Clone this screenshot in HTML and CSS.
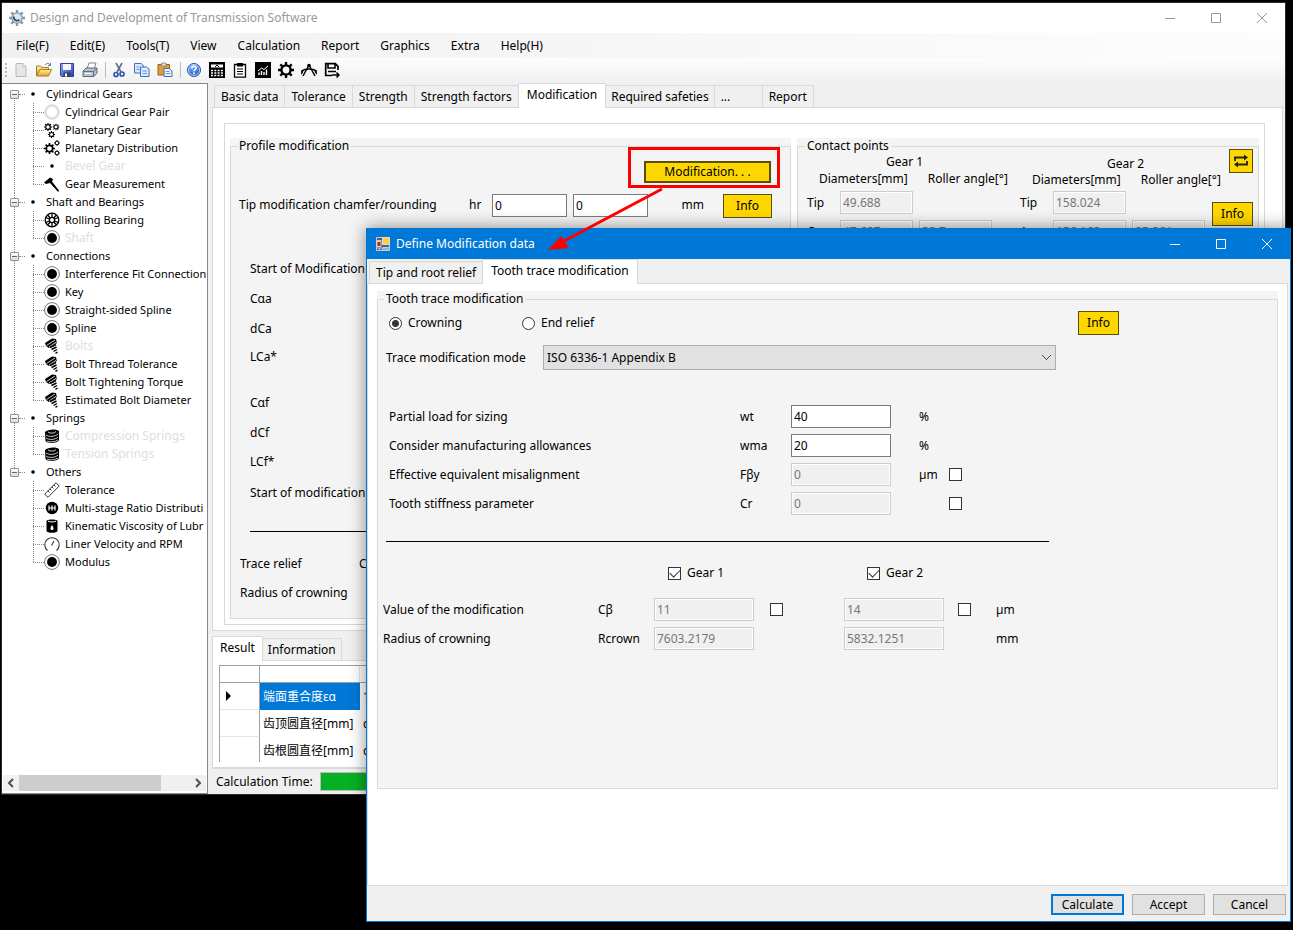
FILE: index.html
```
<!DOCTYPE html>
<html lang="en">
<head>
<meta charset="utf-8">
<title>Design and Development of Transmission Software</title>
<link rel="stylesheet" href="styles.css">
</head>
<body>
<svg class="sprite" aria-hidden="true">
  <defs>
    <linearGradient id="gold" x1="0" y1="0" x2="0" y2="1"><stop offset="0" stop-color="#fff0a0"/><stop offset="1" stop-color="#e8a317"/></linearGradient>
    <linearGradient id="blue" x1="0" y1="0" x2="1" y2="1"><stop offset="0" stop-color="#8fa8f5"/><stop offset="1" stop-color="#2a3fae"/></linearGradient>
    <radialGradient id="orb" cx=".4" cy=".3" r=".8"><stop offset="0" stop-color="#7fb2ff"/><stop offset="1" stop-color="#0b45b8"/></radialGradient>
    <symbol id="dot" viewBox="0 0 16 16"><circle cx="8" cy="8" r="1.8"/></symbol>
    <symbol id="ring" viewBox="0 0 16 16"><circle cx="8" cy="8" r="6.6" fill="none" stroke="#dcdcdc" stroke-width="2.4"/></symbol>
    <symbol id="disc" viewBox="0 0 16 16"><circle cx="8" cy="8" r="7.4" fill="#fff" stroke="#777" stroke-width="1"/><circle cx="8" cy="8" r="4.9"/></symbol>
    <symbol id="cog" viewBox="0 0 16 16"><circle cx="8" cy="8" r="4.6" fill="none" stroke="currentColor" stroke-width="2.4"/><path d="M8 0v3M8 13v3M0 8h3M13 8h3M2.3 2.3l2.2 2.2M11.5 11.5l2.2 2.2M13.7 2.3l-2.2 2.2M4.5 11.5l-2.2 2.2" stroke="currentColor" stroke-width="2.4"/></symbol>
    <symbol id="cogs3" viewBox="0 0 16 16"><use href="#cog" x="0" y="1" width="8" height="8"/><use href="#cog" x="8.500" y="1.500" width="7" height="7"/><use href="#cog" x="4" y="9" width="7" height="7"/></symbol>
    <symbol id="cogs2" viewBox="0 0 16 16"><use href="#cog" x="0" y="3" width="11" height="11"/><use href="#cog" x="10" y="0" width="6" height="6"/><use href="#cog" x="10" y="10" width="6" height="6"/></symbol>
    <symbol id="caliper" viewBox="0 0 16 16"><path d="M0 6.500l6-5 3 1.500-1 2.500 7 9-.8 1.500L6 7 2 8z"/></symbol>
    <symbol id="bearing" viewBox="0 0 16 16"><g fill="none" stroke="#000" stroke-width="1.300"><circle cx="8" cy="8" r="6.800"/><circle cx="8" cy="8" r="2.600"/><path d="M8 1v4.500M8 10.500V15M1.500 5.500l4 1.500M10.500 9l4 1.500M14.500 5.500l-4 1.500M5.500 9l-4 1.500M3.500 3l2.800 3M9.800 10l2.800 3M12.500 3L9.700 6M6.300 10L3.500 13"/></g></symbol>
    <symbol id="bolt" viewBox="0 0 16 16"><path d="M1 5l7-4.500 4 .5 1 4-8 5-3-2z"/><path d="M2.500 7.500L11 2M5 9l7.500-5" stroke="#fff" stroke-width=".8"/><path d="M6 9.500l6-3M7.500 11.500l5-2.500M9.500 13.500l3.500-2M11.500 15.300l2-1.300" stroke="#000" stroke-width="1.400"/></symbol>
    <symbol id="spring" viewBox="0 0 16 16"><path d="M1 4c2-3 12-3.500 14-1v9c-1 3.500-12 4-13.500 1z"/><path d="M4 4c2 1.800 7 1.300 8-.5M2 7c3 2 9 2 12-1M2 10c3 2 9 2 12-1M3 13c3 1.500 8 1 11-1" fill="none" stroke="#fff" stroke-width=".8"/></symbol>
    <symbol id="ruler" viewBox="0 0 16 16"><path d="M.7 12L12 .8l3.200 3.200L4 15.300zM4 9l1.500 1.500M6 7l1.500 1.500M8 5l1.500 1.500M10 3l1.500 1.500" fill="#fff" stroke="#333" stroke-width="1"/></symbol>
    <symbol id="ratio" viewBox="0 0 16 16"><circle cx="8" cy="8" r="6.200"/><path d="M5 5.500v5M8 5.500v5M11 5.500v5M5 8h6" stroke="#fff" stroke-width="1.200" fill="none"/></symbol>
    <symbol id="drum" viewBox="0 0 16 16"><path d="M2.500 3c0-2 11-2 11 0v10c0 2.400-11 2.400-11 0z"/><path d="M4 3.200c1.500 1 6.500 1 8 0" stroke="#fff" fill="none"/><path d="M8 7c2 2.500 2 5 0 5s-2-2.500 0-5z" fill="#fff"/></symbol>
    <symbol id="gauge" viewBox="0 0 16 16"><path d="M3.500 14.500A7.200 7.200 0 1 1 12.500 14.500M7.500 9.500L10 5" fill="none" stroke="#333" stroke-width="1.100"/></symbol>
    <symbol id="new" viewBox="0 0 16 16"><path d="M3 1.500h7l3 3v10H3z" fill="#e6e6e6" stroke="#b9b9b9"/><path d="M10 1.500v3h3" fill="#fff" stroke="#b9b9b9"/></symbol>
    <symbol id="open" viewBox="0 0 16 16"><path d="M.5 13.500v-9.500h4l1 1.500h7v3" fill="url(#gold)" stroke="#a87c22"/><path d="M.5 14L4 7.500h11.500l-3 6.500z" fill="url(#gold)" stroke="#a87c22"/><path d="M9 3c2-2.500 4-2 5 0m.5-2v2.500H12" fill="none" stroke="#5673a0"/></symbol>
    <symbol id="save" viewBox="0 0 16 16"><path d="M1.500 1.500h13v13h-12l-1-1z" fill="url(#blue)" stroke="#3241a0"/><path d="M4 2h8v6H4z" fill="#f4f6ff"/><path d="M4.500 10.500h7v4h-7z" fill="#333b66"/><path d="M6 11.500h2v3H6z" fill="#fff"/></symbol>
    <symbol id="print" viewBox="0 0 16 16"><path d="M5 7l2-6h7l-2 6z" fill="#fff" stroke="#7d8696"/><path d="M1 9l3-3h11v5l-3 3.500H1z" fill="#b9c2d0" stroke="#606b7c"/><path d="M1 9.500h10.500L15 6.500M11.500 9.500V14" fill="none" stroke="#606b7c"/><path d="M3 11.500h6" stroke="#fff"/></symbol>
    <symbol id="cut" viewBox="0 0 16 16"><path d="M5 1l5 9M11 1L6 10" stroke="#5f7185" stroke-width="1.600"/><g fill="none" stroke="#2b57b8" stroke-width="1.700"><circle cx="5" cy="12.500" r="2"/><circle cx="11" cy="12" r="2"/></g></symbol>
    <symbol id="copy" viewBox="0 0 16 16"><g fill="#dbe8ff" stroke="#3f6fc0"><path d="M.5 1.500h6.500l2.500 2V11h-9z"/><path d="M6.500 5h6l2.500 2v7.500H6.500z"/><path d="M2.500 5h3M2.500 7.500h3M8.500 9h4.500M8.500 11.500h4.500" stroke="#6c96dc"/></g></symbol>
    <symbol id="paste" viewBox="0 0 16 16"><path d="M1 2.500h11.500V13H1z" fill="#dc9d3c" stroke="#94631b"/><path d="M4.500 1h4.500v3H4.500z" fill="#dcdcdc" stroke="#777" stroke-width=".7"/><path d="M7 6.500h5.500L15 9v5.500H7z" fill="#eef4ff" stroke="#4a6cae"/><path d="M8.500 9.500h4M8.500 11.500h5" stroke="#6c96dc"/></symbol>
    <symbol id="help" viewBox="0 0 16 16"><circle cx="8" cy="8" r="6.500" fill="url(#orb)" stroke="#2356b5"/><circle cx="8" cy="8" r="5.500" fill="none" stroke="#dfeaff" stroke-width=".8"/><path d="M5.800 6.400c0-3 4.600-2.800 4.400-.3-.1 1.500-2.200 1.500-2.200 3.200M8 10.600v1.700" fill="none" stroke="#fff" stroke-width="1.600"/></symbol>
    <symbol id="calc" viewBox="0 0 16 16"><path d="M0 0h16v16H0z"/><path d="M2 2.500h12v3H2z" fill="#fff"/><path d="M6 5l2-2 2 2" stroke="#000" fill="none"/><path d="M2 8.500h12M2 11h12M2 13.500h12" stroke="#fff" stroke-width="1.400" stroke-dasharray="2 1.300"/></symbol>
    <symbol id="clip" viewBox="0 0 16 16"><path d="M2.500 2.500h11v12.700h-11z" fill="#fff" stroke="#000" stroke-width="1.300"/><path d="M5 1h6v3.500H5z"/><path d="M5 7h6M5 9.500h6M5 12h6" stroke="#000"/></symbol>
    <symbol id="chart" viewBox="0 0 16 16"><path d="M0 0h16v16H0z"/><path d="M4 13v-2.500M6.500 13V9M9 13v-3M11.500 13V7.500" stroke="#fff" stroke-width="1.400"/><path d="M3 9l3.500-3 2.500 1.500L13 4" fill="none" stroke="#fff"/></symbol>
    <symbol id="compass" viewBox="0 0 16 16"><path d="M8 3L2 14M8 3l6 11M0 9.500c4-3.500 12-3.500 16 0M0 12l2-3M16 12l-2-3" stroke="#000" stroke-width="1.500" fill="none"/><circle cx="8" cy="3.500" r="1.800"/></symbol>
    <symbol id="export" viewBox="0 0 16 16"><path d="M8 13.500H1.700V1.700h9.600L14 4.300V8" fill="none" stroke="#000" stroke-width="1.700"/><path d="M4 2v4h7V2M4 9.500h8" fill="none" stroke="#000" stroke-width="1.600"/><path d="M8 13h7M12.500 10.500L15 13l-2.500 2.500" fill="none" stroke="#000" stroke-width="1.500"/></symbol>
    <symbol id="min" viewBox="0 0 12 12"><path d="M1 6.500h10" stroke="currentColor"/></symbol>
    <symbol id="max" viewBox="0 0 12 12"><path d="M1.500 1.500h9v9h-9z" stroke="currentColor" fill="none"/></symbol>
    <symbol id="close" viewBox="0 0 12 12"><path d="M1 1l10 10M11 1L1 11" stroke="currentColor"/></symbol>
  </defs>
</svg>

<div class="desktop">
  <main class="window main-window">
    <header class="titlebar">
      <svg class="app-icon" viewBox="0 0 16 16"><use href="#cog" color="#8499ab"/><circle cx="8" cy="8" r="4.500" fill="#dbe8f0"/><path d="M5 6.500a3.200 3.200 0 0 0 5.500 3" fill="none" stroke="#2f4b66" stroke-width="1.700"/></svg>
      <h1>Design and Development of Transmission Software</h1>
      <div class="caption-buttons">
        <button aria-label="Minimize"><svg><use href="#min"/></svg></button>
        <button aria-label="Maximize"><svg><use href="#max"/></svg></button>
        <button aria-label="Close"><svg><use href="#close"/></svg></button>
      </div>
    </header>
    <nav class="menubar">
      <button>File(F)</button><button>Edit(E)</button><button>Tools(T)</button><button>View</button><button>Calculation</button><button>Report</button><button>Graphics</button><button>Extra</button><button>Help(H)</button>
    </nav>
    <div class="toolbar">
      <span class="grip"></span>
      <button aria-label="New"><svg><use href="#new"/></svg></button>
      <button aria-label="Open"><svg><use href="#open"/></svg></button>
      <button aria-label="Save"><svg><use href="#save"/></svg></button>
      <button aria-label="Print"><svg><use href="#print"/></svg></button>
      <span class="sep"></span>
      <button aria-label="Cut"><svg><use href="#cut"/></svg></button>
      <button aria-label="Copy"><svg><use href="#copy"/></svg></button>
      <button aria-label="Paste"><svg><use href="#paste"/></svg></button>
      <span class="sep"></span>
      <button aria-label="Help"><svg><use href="#help"/></svg></button>
      <button aria-label="Calculate"><svg><use href="#calc"/></svg></button>
      <button aria-label="Report"><svg><use href="#clip"/></svg></button>
      <button aria-label="Chart"><svg><use href="#chart"/></svg></button>
      <button aria-label="Settings"><svg><use href="#cog"/></svg></button>
      <button aria-label="Drawing"><svg><use href="#compass"/></svg></button>
      <button aria-label="Export"><svg><use href="#export"/></svg></button>
    </div>

    <div class="workspace">
      <aside class="tree-pane">
        <ul class="tree">
          <li><div class="node"><i class="expander"></i><i class="stub"></i><svg><use href="#dot"/></svg>Cylindrical Gears</div>
            <ul>
              <li><svg><use href="#ring"/></svg>Cylindrical Gear Pair</li>
              <li><svg><use href="#cogs3"/></svg>Planetary Gear</li>
              <li><svg><use href="#cogs2"/></svg>Planetary Distribution</li>
              <li class="off"><svg><use href="#dot"/></svg>Bevel Gear</li>
              <li><svg><use href="#caliper"/></svg>Gear Measurement</li>
            </ul></li>
          <li><div class="node"><i class="expander"></i><i class="stub"></i><svg><use href="#dot"/></svg>Shaft and Bearings</div>
            <ul>
              <li><svg><use href="#bearing"/></svg>Rolling Bearing</li>
              <li class="off"><svg><use href="#disc"/></svg>Shaft</li>
            </ul></li>
          <li><div class="node"><i class="expander"></i><i class="stub"></i><svg><use href="#dot"/></svg>Connections</div>
            <ul>
              <li><svg><use href="#disc"/></svg>Interference Fit Connection</li>
              <li><svg><use href="#disc"/></svg>Key</li>
              <li><svg><use href="#disc"/></svg>Straight-sided Spline</li>
              <li><svg><use href="#disc"/></svg>Spline</li>
              <li class="off"><svg><use href="#bolt"/></svg>Bolts</li>
              <li><svg><use href="#bolt"/></svg>Bolt Thread Tolerance</li>
              <li><svg><use href="#bolt"/></svg>Bolt Tightening Torque</li>
              <li><svg><use href="#bolt"/></svg>Estimated Bolt Diameter</li>
            </ul></li>
          <li><div class="node"><i class="expander"></i><i class="stub"></i><svg><use href="#dot"/></svg>Springs</div>
            <ul>
              <li class="off"><svg><use href="#spring"/></svg>Compression Springs</li>
              <li class="off"><svg><use href="#spring"/></svg>Tension Springs</li>
            </ul></li>
          <li><div class="node"><i class="expander"></i><i class="stub"></i><svg><use href="#dot"/></svg>Others</div>
            <ul>
              <li><svg><use href="#ruler"/></svg>Tolerance</li>
              <li><svg><use href="#ratio"/></svg>Multi-stage Ratio Distributi</li>
              <li><svg><use href="#drum"/></svg>Kinematic Viscosity of Lubr</li>
              <li><svg><use href="#gauge"/></svg>Liner Velocity and RPM</li>
              <li><svg><use href="#disc"/></svg>Modulus</li>
            </ul></li>
        </ul>
        <div class="scrollbar">
          <svg viewBox="0 0 16 16"><path d="M10 4L6 8l4 4" /></svg>
          <span class="track"><span class="thumb"></span></span>
          <svg viewBox="0 0 16 16"><path d="M6 4l4 4-4 4" /></svg>
        </div>
      </aside>

      <div class="content">
        <div class="tabs">
          <button>Basic data</button><button>Tolerance</button><button>Strength</button><button>Strength factors</button><button class="active">Modification</button><button>Required safeties</button><button class="more">...</button><button>Report</button>
        </div>
        <section class="page main-page">
          <div class="page-inner">
            <div class="group profile">
              <fieldset>
                <legend>Profile modification</legend>
                <div class="launch"><button class="gold focus">Modification. . .</button></div>
                <div class="tip-row">
                  <label for="tip">Tip modification chamfer/rounding</label><span>hr</span>
                  <input id="tip" value="0"><input aria-label="Tip, gear 2" value="0">
                  <span class="unit">mm</span><button class="gold info wide">Info</button>
                </div>
                <div class="factors">
                  <span>Start of Modification</span><span>Cαa</span><span>dCa</span><span>LCa*</span>
                  <span></span><span>Cαf</span><span>dCf</span><span>LCf*</span><span>Start of modification</span>
                </div>
                <hr>
                <div class="relief"><span>Trace relief</span><span>Crowning</span><span>Radius of crowning</span></div>
              </fieldset>
            </div>
            <div class="group contact">
              <fieldset>
                <legend>Contact points</legend>
                <div class="gear">
                  <div class="gear-name">Gear 1</div>
                  <div class="gear-head"><span>Diameters[mm]</span><span>Roller angle[°]</span></div>
                  <div class="gear-row"><label for="t1">Tip</label><input id="t1" value="49.688" disabled></div>
                  <div class="gear-row"><label for="c1">C</label><input id="c1" value="47.687" disabled><input aria-label="Angle 1" value="28.7" disabled></div>
                </div>
                <div class="gear second">
                  <div class="gear-name">Gear 2</div>
                  <div class="gear-head"><span>Diameters[mm]</span><span>Roller angle[°]</span></div>
                  <div class="gear-row"><label for="t2">Tip</label><input id="t2" value="158.024" disabled></div>
                  <div class="gear-row"><label for="c2">A</label><input id="c2" value="156.162" disabled><input aria-label="Angle 2" value="25.261" disabled></div>
                </div>
                <div class="side">
                  <button class="gold swap" aria-label="Swap"><svg viewBox="0 0 16 16"><path d="M2 8V4.500h10M14 8v3.500H4" fill="none" stroke="#222" stroke-width="1.800"/><path d="M11 1.500L15 4.500l-4 3zM5 8.500l-4 3 4 3z" fill="#222"/></svg></button>
                  <button class="gold info">Info</button>
                </div>
              </fieldset>
            </div>
          </div>
        </section>

        <div class="tabs result-tabs"><button class="active">Result</button><button>Information</button></div>
        <section class="page result-page">
          <table>
            <thead><tr><th></th><th></th><th></th></tr></thead>
            <tbody>
              <tr><th><svg class="marker" viewBox="0 0 6 10"><path d="M0 0l5 5-5 5z"/></svg></th><td class="selected">端面重合度εα</td><td>1.6</td></tr>
              <tr><th></th><td>齿顶圆直径[mm]</td><td>da</td></tr>
              <tr><th></th><td>齿根圆直径[mm]</td><td>df</td></tr>
            </tbody>
          </table>
        </section>
        <footer class="status"><span>Calculation Time:</span><span class="progress"></span></footer>
      </div>
    </div>
  </main>

  <section class="window dialog" role="dialog" aria-label="Define Modification data">
    <header class="titlebar">
      <svg class="app-icon" viewBox="0 0 16 16"><path d="M1.500 1.500h13v13h-13z" fill="#2f62bd" stroke="#d4c9b4"/><path d="M1.500 4.500h5M4.500 12v3M7.500 12v3M1.500 12h6M7.500 11.500h7" stroke="#d4c9b4"/><path d="M7.500 1.500h7v7h-7z" fill="#ffd23c" stroke="#e8dcc0"/><path d="M2 5.500h4v5H2z" fill="#b32222" stroke="#f0d0c0"/><path d="M8 12h6v2H8z" fill="#8db2f0"/></svg>
      <h2>Define Modification data</h2>
      <div class="caption-buttons">
        <button aria-label="Minimize"><svg><use href="#min"/></svg></button>
        <button aria-label="Maximize"><svg><use href="#max"/></svg></button>
        <button aria-label="Close"><svg><use href="#close"/></svg></button>
      </div>
    </header>
    <div class="tabs"><button>Tip and root relief</button><button class="active">Tooth trace modification</button></div>
    <div class="page dialog-page">
      <div class="group trace">
        <fieldset>
          <legend>Tooth trace modification</legend>
          <div class="kind">
            <label><input type="radio" name="kind" checked>Crowning</label>
            <label><input type="radio" name="kind">End relief</label>
            <button class="gold info">Info</button>
          </div>
          <div class="mode">
            <label for="mode">Trace modification mode</label>
            <select id="mode"><option>ISO 6336-1 Appendix B</option></select>
          </div>
          <div class="params">
            <label for="wt">Partial load for sizing</label><span>wt</span><input id="wt" value="40"><span class="unit">%</span><i></i>
            <label for="wma">Consider manufacturing allowances</label><span>wma</span><input id="wma" value="20"><span class="unit">%</span><i></i>
            <label for="fby">Effective equivalent misalignment</label><span>Fβy</span><input id="fby" value="0" disabled><span class="unit">µm</span><input type="checkbox" aria-label="Own Fβy">
            <label for="cr">Tooth stiffness parameter</label><span>Cr</span><input id="cr" value="0" disabled><span class="unit"></span><input type="checkbox" aria-label="Own Cr">
          </div>
          <hr>
          <div class="gear-checks">
            <label><input type="checkbox" checked>Gear 1</label>
            <label><input type="checkbox" checked>Gear 2</label>
          </div>
          <div class="values">
            <label for="cb">Value of the modification</label><span>Cβ</span><input id="cb" value="11" disabled><input type="checkbox" aria-label="Own Cβ, gear 1"><input aria-label="Cβ, gear 2" value="14" disabled><input type="checkbox" aria-label="Own Cβ, gear 2"><span>µm</span>
            <label for="rc">Radius of crowning</label><span>Rcrown</span><input id="rc" value="7603.2179" disabled><i></i><input aria-label="Rcrown, gear 2" value="5832.1251" disabled><i></i><span>mm</span>
          </div>
        </fieldset>
      </div>
    </div>
    <footer class="actions"><button class="default">Calculate</button><button>Accept</button><button>Cancel</button></footer>
  </section>

  <div class="callout-box"></div>
  <svg class="callout-arrow" viewBox="0 0 120 66"><path d="M116 2L18 54" stroke="#f00" stroke-width="3"/><path d="M2 63L15 49l8 12z" fill="#f00"/></svg>
</div>
</body>
</html>
```

FILE: styles.css
```
* { box-sizing: border-box; }

body {
  margin: 0;
  background: #000;
  color: #000;
  font: 12px/16px "Noto Sans", "Noto Sans CJK SC", sans-serif;
}

button, input, select { font: inherit; color: inherit; margin: 0; }
h1, h2 { margin: 0; font-size: 12px; font-weight: normal; }
ul { list-style: none; margin: 0; padding: 0; }
svg { display: block; width: 16px; height: 16px; flex: none; }
.sprite { position: absolute; width: 0; height: 0; }

.desktop { position: relative; height: 100vh; min-height: 930px; overflow: hidden; }

/* Windows */
.window { position: absolute; display: flex; flex-direction: column; background: #f0f0f0; }
.main-window { inset: 2px 7px 135px 1px; border: 1px solid #2b2b2b; }
.dialog { inset: 228px 2px 8px 366px; border: 1px solid #0078d7; box-shadow: 0 0 16px rgba(0, 0, 0, .45); }

.titlebar { display: flex; align-items: center; gap: 5px; height: 30px; flex: none; padding-left: 7px; background: #fff; color: #999; }
.titlebar h1, .titlebar h2 { flex: 1; }
.dialog .titlebar { background: #0078d7; color: #fff; padding-left: 8px; }
.caption-buttons { display: flex; }
.caption-buttons button { width: 46px; height: 28px; padding: 0 17px; border: 0; background: none; }
.caption-buttons svg { width: 12px; height: 12px; }

.menubar { display: flex; gap: 1px; height: 25px; flex: none; padding-left: 4px; background: linear-gradient(90deg, #f0f0f0, #fdfdfd); }
.menubar button { border: 0; background: none; padding: 0 10px; }

.toolbar { display: flex; align-items: center; height: 25px; flex: none; padding: 0 0 2px 3px; background: linear-gradient(#fdfdfd, #f0f0f0); }
.toolbar button { width: 23px; height: 22px; padding: 0 3px; border: 0; background: none; }
.grip { width: 2px; height: 14px; margin-right: 3px; background: repeating-linear-gradient(#b5b5b5 0 2px, transparent 2px 4px); }
.sep { width: 1px; height: 16px; margin: 0 2px 0 3px; background: #bdbdbd; }

.workspace { display: flex; flex: 1; min-height: 0; }

/* Navigation tree */
.tree-pane { display: flex; flex-direction: column; justify-content: space-between; width: 206px; flex: none; padding: 1px 1px 2px; background: #fff; border: 1px solid #828790; border-left: 0; }
.tree { overflow: hidden; white-space: nowrap; font-size: 11px; }
.tree > li { background: repeating-linear-gradient(#888 0 1px, transparent 1px 2px) 11px 0 / 1px 100% no-repeat; }
.tree > li:first-child { background-position: 11px 9px; }
.tree > li:last-child { background-size: 1px 9px; }
.node { display: flex; align-items: center; height: 18px; padding-left: 7px; }
.node svg { margin-right: 5px; }
.expander { width: 9px; height: 9px; flex: none; border: 1px solid #919191; border-radius: 1px; background: linear-gradient(#4b63a7, #4b63a7) center / 5px 1px no-repeat, linear-gradient(#fff, #ddd); }
.stub { width: 6px; flex: none; border-top: 1px dotted #888; }
.tree ul { margin-left: 30px; background: repeating-linear-gradient(#888 0 1px, transparent 1px 2px) 0 0 / 1px calc(100% - 9px) no-repeat; }
.tree ul li { display: flex; align-items: center; height: 18px; }
.tree ul li::before { content: ""; width: 11px; flex: none; border-top: 1px dotted #888; }
.tree ul svg { margin-right: 5px; }
.off { color: #dedede; font-size: 12px; }

.scrollbar { display: flex; height: 16px; background: #f0f0f0; }
.scrollbar path { fill: none; stroke: #505050; stroke-width: 2; }
.track { flex: 1; }
.thumb { display: block; width: 83%; height: 100%; background: #cdcdcd; }

/* Tabs and pages */
.content { display: flex; flex-direction: column; flex: 1; min-width: 0; padding: 0 2px 0 4px; }
.tabs { display: flex; align-items: flex-end; height: 24px; flex: none; padding-left: 2px; }
.tabs button { height: 22px; padding: 0 6px; border: 1px solid #d9d9d9; border-width: 1px 1px 0 0; background: #f0f0f0; white-space: nowrap; }
.tabs button:first-child { border-left-width: 1px; }
.tabs .active { position: relative; z-index: 1; height: 25px; margin: 0 0 -1px -1px; padding: 0 8px 3px; border-left-width: 1px; background: #fff; }
.tabs .active + button { padding: 0 5px; }
.tabs .active:first-child { margin-left: -2px; padding: 0 7px 3px; }
.tabs .more { width: 48px; text-align: left; }
.page { background: #fff; border: 1px solid #d9d9d9; }
.main-page { flex: 1; min-height: 0; padding: 15px 17px 5px 11px; }
.page-inner { display: flex; gap: 6px; height: 100%; padding: 14px 5px 5px; border: 1px solid #d9d9d9; }

.group { display: flex; background: #f4f4f4; }
fieldset { flex: 1; min-width: 0; margin: 0; padding: 0 8px; border: 1px solid #d9d9d9; }
legend { padding: 0 2px; margin-left: -2px; }
.profile { width: 561px; flex: none; }
.contact { flex: 1; min-width: 0; }
.contact fieldset { display: flex; padding: 0 5px 0 9px; }

input:not([type]) { height: 23px; min-width: 0; padding: 0 2px; border: 1px solid #7a7a7a; border-radius: 0; background: #fff; }
input:not([type]):disabled { border-color: #ccc; background: #f0f0f0; color: #777; box-shadow: inset 0 0 0 1px #fff; }

.gold { height: 24px; padding: 0 10px; border: 1px solid #5c4f08; background: gold; }
.gold.focus { width: 127px; height: 22px; padding: 0; border-width: 2px; }
.info { width: 41px; padding: 0; }
.info.wide { width: 49px; }

.launch { display: flex; justify-content: flex-end; padding: 7px 11px 9px 0; }
.tip-row { display: grid; grid-template-columns: 224px 17px 75px 75px 50px 62px; gap: 6px; align-items: center; }
.tip-row .unit { justify-self: end; }
.tip-row .info { justify-self: end; margin-top: 2px; }
.factors { display: grid; grid-template-rows: 31px 30px 29px 28px 17px 30px 30px 27px 36px; align-items: center; padding: 35px 0 0 11px; }
fieldset hr { border: 0; border-top: 1px solid #000; }
.profile hr { margin: 20px 11px 17px; }
.relief { display: grid; grid-template-columns: 119px 1fr; grid-auto-rows: 29px; align-items: center; padding-left: 1px; }

.gear { width: 213px; flex: none; }
.second { width: 192px; padding-top: 2px; }
.gear-name { padding-left: 79px; }
.second .gear-name { padding-left: 87px; }
.gear-head { display: flex; gap: 20px; height: 18px; padding: 1px 0 0 12px; white-space: nowrap; }
.second .gear-head { height: 16px; padding-top: 0; }
.gear-row { display: grid; grid-template-columns: 27px 73px 73px; gap: 6px; align-items: center; height: 29px; }
.side { display: flex; flex-direction: column; align-items: flex-end; gap: 29px; width: 41px; margin-top: -5px; }
.swap { width: 24px; padding: 0 3px; }

.result-tabs { margin-top: 5px; }
.result-page { height: 108px; flex: none; padding: 4px 6px; overflow: hidden; }
.result-page table { display: block; width: 100%; height: 97px; overflow: hidden; border-top: 1px solid #a0a0a0; border-left: 1px solid #a0a0a0; border-spacing: 0; }
.result-page tr { display: grid; grid-template-columns: 40px 100px 1fr; height: 27px; }
.result-page thead tr { height: 17px; border-bottom: 1px solid #a0a0a0; }
.result-page th, .result-page td { display: flex; align-items: center; padding: 0 3px; font-weight: normal; white-space: nowrap; }
.result-page thead th { border-right: 1px solid #e5e5e5; }
.result-page tbody th { border-bottom: 1px solid #e5e5e5; padding-left: 6px; }
.result-page tr th:first-child { border-right: 1px solid #a0a0a0; }
.marker { width: 6px; height: 10px; }
.result-page .selected { background: #0078d7; color: #fff; }
.status { display: flex; align-items: center; gap: 7px; height: 26px; flex: none; padding-left: 4px; border-top: 1px solid #d9d9d9; }
.progress { flex: 1; height: 19px; border: 1px solid #bcbcbc; background: #06b025; }

/* Dialog */
.dialog .tabs button { padding: 0 6px; }
.dialog .tabs .active { padding: 0 8px 3px; }
.dialog-page { display: flex; align-items: flex-start; flex: 1; margin-right: 2px; padding: 7px 9px 0; }
.trace { flex: 1; height: 498px; }
.kind { display: grid; grid-template-columns: 133px 1fr 41px; align-items: center; padding: 4px 150px 0 3px; }
.kind label, .gear-checks label { display: flex; align-items: center; gap: 6px; }
.mode { display: grid; grid-template-columns: 157px 1fr; align-items: center; margin: 10px 213px 0 0; }
.mode select { height: 25px; padding: 0 28px 0 3px; border: 1px solid #adadad; border-radius: 0; appearance: none; background: linear-gradient(45deg, transparent 42%, #444 42% 58%, transparent 58%) right 8px center / 5px 5px no-repeat, #e1e1e1; }
.mode select { background: linear-gradient(45deg, transparent 42%, #444 42% 58%, transparent 58%) right 8px center / 5px 5px no-repeat, linear-gradient(-45deg, transparent 42%, #444 42% 58%, transparent 58%) right 4px center / 5px 5px no-repeat, #e1e1e1; }
input[type="radio"], input[type="checkbox"] { display: grid; place-items: center; width: 13px; height: 13px; flex: none; border: 1px solid #333; background: #fff; appearance: none; }
input[type="radio"] { border-radius: 50%; }
input[type="radio"]:checked { background: radial-gradient(circle, #333 0 3px, #fff 4px); }
input[type="checkbox"]:checked::after { content: ""; width: 9px; height: 5px; margin-top: -3px; border: solid #333; border-width: 0 0 1px 1px; transform: rotate(-45deg); }
.params { display: grid; grid-template-columns: 351px 51px 100px 28px 30px 13px; grid-auto-rows: 29px; align-items: center; padding: 32px 0 0 3px; }
.params .unit { grid-column: 5; }
.trace hr { margin: 23px 220px 0 0; }
.gear-checks { display: grid; grid-template-columns: 199px auto; padding: 23px 0 0 282px; }
.values { display: grid; grid-template-columns: 215px 56px 100px 16px 74px 100px 14px 38px 30px; grid-auto-rows: 29px; align-items: center; margin-left: -3px; padding-top: 14px; }
.values > :nth-child(7n + 4) { grid-column: 4 / 6; margin-left: 16px; }
.values > :nth-child(7n + 5) { grid-column: 6; }
.values > :nth-child(7n + 6) { grid-column: 8; }
.values > :nth-child(7n) { grid-column: 9; }

.actions { display: flex; justify-content: flex-end; align-items: center; gap: 8px; height: 35px; flex: none; padding: 2px 4px 0 0; }
.actions button { width: 73px; height: 21px; padding: 0; border: 1px solid #adadad; background: #e1e1e1; }
.actions .default { border: 2px solid #0078d7; }

/* Annotation drawn across both windows */
.callout-box { position: absolute; left: 628px; top: 147px; width: 152px; height: 41px; border: 3px solid #f00; }
.callout-arrow { position: absolute; left: 546px; top: 187px; width: 120px; height: 66px; }
```
